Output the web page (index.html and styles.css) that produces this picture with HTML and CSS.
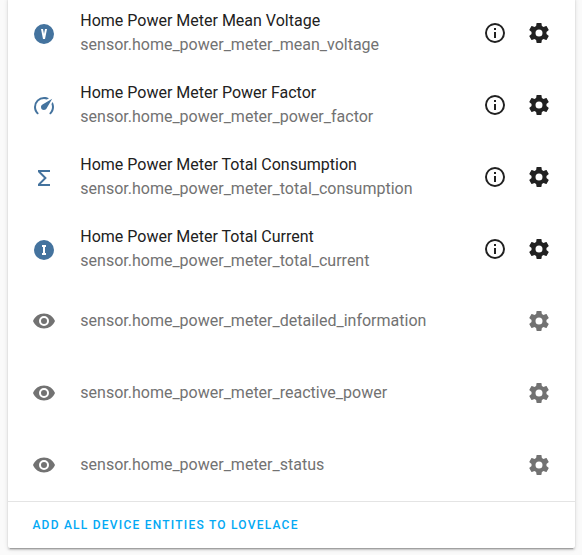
FILE: index.html
```
<!DOCTYPE html>
<html lang="en">
<head>
<meta charset="utf-8">
<title>Device entities</title>
<link rel="stylesheet" href="styles.css">
</head>
<body>
<svg class="symbols" aria-hidden="true">
  <symbol id="volt" viewBox="0 0 24 24"><path d="M9,7L11,17H13L15,7H13L12,12L11,7H9M12,2A10,10 0 0,1 22,12A10,10 0 0,1 12,22A10,10 0 0,1 2,12A10,10 0 0,1 12,2Z"/></symbol>
  <symbol id="current" viewBox="0 0 24 24"><path d="M12,2A10,10 0 0,1 22,12A10,10 0 0,1 12,22A10,10 0 0,1 2,12A10,10 0 0,1 12,2M14,7H10V9H11V15H10V17H14V15H13V9H14V7Z"/></symbol>
  <symbol id="gauge" viewBox="0 0 24 24"><path d="M12,16A3,3 0 0,1 9,13C9,11.88 9.61,10.9 10.5,10.39L20.21,4.77L14.68,14.35C14.18,15.33 13.17,16 12,16M12,3C13.81,3 15.5,3.5 16.97,4.32L14.87,5.53C14,5.19 13,5 12,5A8,8 0 0,0 4,13C4,15.21 4.89,17.21 6.34,18.65H6.35C6.74,19.04 6.74,19.67 6.35,20.06C5.96,20.45 5.32,20.45 4.93,20.07V20.07C3.12,18.26 2,15.76 2,13A10,10 0 0,1 12,3M22,13C22,15.76 20.88,18.26 19.07,20.07V20.07C18.68,20.45 18.05,20.45 17.66,20.06C17.27,19.67 17.27,19.04 17.66,18.65V18.65C19.11,17.2 20,15.21 20,13C20,12 19.81,11 19.46,10.1L20.67,8C21.5,9.5 22,11.18 22,13Z"/></symbol>
  <symbol id="sigma" viewBox="0 0 24 24"><path d="M18,6H8.83L14.83,12L8.83,18H18V20H6V18L12,12L6,6V4H18V6Z"/></symbol>
  <symbol id="eye" viewBox="0 0 24 24"><path d="M12,9A3,3 0 0,0 9,12A3,3 0 0,0 12,15A3,3 0 0,0 15,12A3,3 0 0,0 12,9M12,17A5,5 0 0,1 7,12A5,5 0 0,1 12,7A5,5 0 0,1 17,12A5,5 0 0,1 12,17M12,4.5C7,4.5 2.73,7.61 1,12C2.73,16.39 7,19.5 12,19.5C17,19.5 21.27,16.39 23,12C21.27,7.61 17,4.5 12,4.5Z"/></symbol>
  <symbol id="info" viewBox="0 0 24 24"><path d="M11,9H13V7H11M12,20C7.59,20 4,16.41 4,12C4,7.59 7.59,4 12,4C16.41,4 20,7.59 20,12C20,16.41 16.41,20 12,20M12,2A10,10 0 0,0 2,12A10,10 0 0,0 12,22A10,10 0 0,0 22,12A10,10 0 0,0 12,2M11,17H13V11H11V17Z"/></symbol>
  <symbol id="cog" viewBox="0 0 24 24"><path d="M12,15.5A3.5,3.5 0 0,1 8.5,12A3.5,3.5 0 0,1 12,8.5A3.5,3.5 0 0,1 15.5,12A3.5,3.5 0 0,1 12,15.5M19.43,12.97C19.47,12.65 19.5,12.33 19.5,12C19.5,11.67 19.47,11.34 19.43,11L21.54,9.37C21.73,9.22 21.78,8.95 21.66,8.73L19.66,5.27C19.54,5.05 19.27,4.96 19.05,5.05L16.56,6.05C16.04,5.66 15.5,5.32 14.87,5.07L14.5,2.42C14.46,2.18 14.25,2 14,2H10C9.75,2 9.54,2.18 9.5,2.42L9.13,5.07C8.5,5.32 7.96,5.66 7.44,6.05L4.95,5.05C4.73,4.96 4.46,5.05 4.34,5.27L2.34,8.73C2.21,8.95 2.27,9.22 2.46,9.37L4.57,11C4.53,11.34 4.5,11.67 4.5,12C4.5,12.33 4.53,12.65 4.57,12.97L2.46,14.63C2.27,14.78 2.21,15.05 2.34,15.27L4.34,18.73C4.46,18.95 4.73,19.03 4.95,18.95L7.44,17.94C7.96,18.34 8.5,18.68 9.13,18.93L9.5,21.58C9.54,21.82 9.75,22 10,22H14C14.25,22 14.46,21.82 14.5,21.58L14.87,18.93C15.5,18.67 16.04,18.34 16.56,17.94L19.05,18.95C19.27,19.03 19.54,18.95 19.66,18.73L21.66,15.27C21.78,15.05 21.73,14.78 21.54,14.63L19.43,12.97Z"/></symbol>
</svg>
<main class="card">
  <div class="row">
    <svg class="icon state"><use href="#volt"/></svg>
    <div class="body"><div>Home Power Meter Mean Voltage</div><div class="secondary">sensor.home_power_meter_mean_voltage</div></div>
    <svg class="icon"><use href="#info"/></svg>
    <svg class="icon"><use href="#cog"/></svg>
  </div>
  <div class="row">
    <svg class="icon state"><use href="#gauge"/></svg>
    <div class="body"><div>Home Power Meter Power Factor</div><div class="secondary">sensor.home_power_meter_power_factor</div></div>
    <svg class="icon"><use href="#info"/></svg>
    <svg class="icon"><use href="#cog"/></svg>
  </div>
  <div class="row">
    <svg class="icon state"><use href="#sigma"/></svg>
    <div class="body"><div>Home Power Meter Total Consumption</div><div class="secondary">sensor.home_power_meter_total_consumption</div></div>
    <svg class="icon"><use href="#info"/></svg>
    <svg class="icon"><use href="#cog"/></svg>
  </div>
  <div class="row">
    <svg class="icon state"><use href="#current"/></svg>
    <div class="body"><div>Home Power Meter Total Current</div><div class="secondary">sensor.home_power_meter_total_current</div></div>
    <svg class="icon"><use href="#info"/></svg>
    <svg class="icon"><use href="#cog"/></svg>
  </div>
  <div class="row disabled">
    <svg class="icon"><use href="#eye"/></svg>
    <div class="body">sensor.home_power_meter_detailed_information</div>
    <svg class="icon"><use href="#cog"/></svg>
  </div>
  <div class="row disabled">
    <svg class="icon"><use href="#eye"/></svg>
    <div class="body">sensor.home_power_meter_reactive_power</div>
    <svg class="icon"><use href="#cog"/></svg>
  </div>
  <div class="row disabled">
    <svg class="icon"><use href="#eye"/></svg>
    <div class="body">sensor.home_power_meter_status</div>
    <svg class="icon"><use href="#cog"/></svg>
  </div>
  <div class="actions"><button class="add" type="button">ADD ALL DEVICE ENTITIES TO LOVELACE</button></div>
</main>
</body>
</html>
```
FILE: styles.css
```
body {
  margin: 0;
  height: 555px;
  overflow: hidden;
  background: #fafafa;
  color: #212121;
  font: 16px/24px Roboto, sans-serif;
}

.symbols {
  display: none;
}

.card {
  display: flow-root;
  box-sizing: border-box;
  width: 567px;
  height: 551px;
  margin: -3px 0 0 8px;
  background: #fff;
  border-radius: 2px;
  box-shadow: 0 2px 2px rgba(0, 0, 0, 0.14), 0 1px 5px rgba(0, 0, 0, 0.12), 0 3px 1px -2px rgba(0, 0, 0, 0.2);
}

.row {
  display: flex;
  align-items: center;
  gap: 20px;
  box-sizing: border-box;
  height: 72px;
  padding: 0 24px;
}

.body {
  flex: 1;
  margin-left: 4.3px;
  white-space: nowrap;
}

.secondary,
.disabled {
  color: #727272;
}

.icon {
  flex: none;
  width: 24px;
  height: 24px;
  fill: currentColor;
}

.state {
  margin-top: 2px;
  color: #44739e;
}

.actions {
  display: flex;
  align-items: center;
  box-sizing: border-box;
  height: 47px;
  padding: 0 16px 1px;
  border-top: 1px solid #e4e4e4;
}

.add {
  padding: 0 8px 0 8.4px;
  border: 0;
  background: none;
  color: #03a9f4;
  font: 500 12px/24px Roboto, sans-serif;
  letter-spacing: 1.23px;
}
```
